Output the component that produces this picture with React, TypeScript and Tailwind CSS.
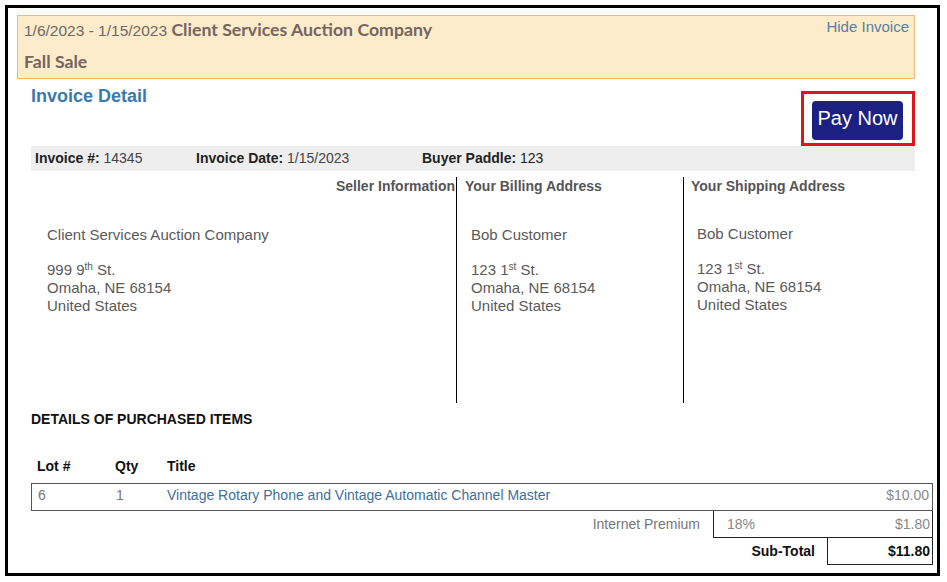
import React from "react";

const arial = { fontFamily: '"Liberation Sans", Arial, sans-serif' };

function Address({ name, street, sup, city, country }: { name: string; street: string; sup: string; city: string; country: string }) {
  const [num, rest] = street.split("|");
  return (
    <div className="text-[15px] leading-[18px] text-[#5a5a5a]">
      <div>{name}</div>
      <div className="mt-[17px]">
        {num}
        <sup className="text-[10px]">{sup}</sup>
        {rest}
      </div>
      <div>{city}</div>
      <div>{country}</div>
    </div>
  );
}

export default function App() {
  return (
    <div className="p-[5px] bg-white" style={arial}>
      <div className="w-[935px] h-[571px] border-[3px] border-black">
        {/* Sale banner */}
        <div className="ml-[9px] mt-[7px] w-[898px] h-[64px] border border-[#f2ba70] bg-[#fdebc9] pl-[6px] pr-[5px]">
          <div className="flex justify-between pt-[3px]">
            <div className="leading-[22px] text-[15.5px] text-[#6a6a6a]">
              1/6/2023 - 1/15/2023{" "}
              <span className="font-bold text-[17.7px] text-[#746562]" style={{ fontFamily: "Lato, sans-serif" }}>
                Client Services Auction Company
              </span>
            </div>
            <a className="leading-[18px] -mt-[1px] text-[15px] text-[#5282a7] cursor-pointer">Hide Invoice</a>
          </div>
          <div className="mt-[9px] leading-[22px] font-bold text-[17.7px] text-[#746562]" style={{ fontFamily: "Lato, sans-serif" }}>
            Fall Sale
          </div>
        </div>

        <div className="ml-[23px]">
          {/* Title + pay button */}
          <div className="flex justify-between w-[884px] h-[67px]">
            <h1 className="pt-[6px] leading-[22px] text-[18px] font-bold text-[#3b79ae]">Invoice Detail</h1>
            <div className="mt-[12px] w-[114px] h-[55px] border-[3px] border-[#e0141b] pl-[8px] pt-[7px]">
              <button className="w-[91px] h-[39px] pb-[5px] rounded-[4px] bg-[#1c2181] text-white text-[20px] leading-[24px]">
                Pay Now
              </button>
            </div>
          </div>

          {/* Invoice info bar */}
          <div className="flex w-[884px] h-[25px] items-center pb-[1px] bg-[#eeeeee] pl-[4px] text-[14px] text-[#222]">
            <div className="w-[161px]">
              <b>Invoice #:</b> <span className="text-[#444]">14345</span>
            </div>
            <div className="w-[226px]">
              <b>Invoice Date:</b> <span className="text-[#444]">1/15/2023</span>
            </div>
            <div>
              <b>Buyer Paddle:</b> <span className="text-[#222]">123</span>
            </div>
          </div>

          {/* Addresses */}
          <div className="flex mt-[6px] h-[226px] text-[14px]">
            <div className="w-[425px]">
              <div className="pt-[1px] pr-[1px] leading-[16px] font-bold text-[#555] text-right">Seller Information</div>
              <div className="mt-[32px] pl-[16px]">
                <Address name="Client Services Auction Company" street="999 9| St." sup="th" city="Omaha, NE 68154" country="United States" />
              </div>
            </div>
            <div className="w-[227px] border-l border-black">
              <div className="pt-[1px] pl-[8px] leading-[16px] font-bold text-[#555]">Your Billing Address</div>
              <div className="mt-[32px] pl-[14px]">
                <Address name="Bob Customer" street="123 1| St." sup="st" city="Omaha, NE 68154" country="United States" />
              </div>
            </div>
            <div className="w-[232px] border-l border-black">
              <div className="pt-[1px] pl-[7px] leading-[16px] font-bold text-[#555]">Your Shipping Address</div>
              <div className="mt-[31px] pl-[13px]">
                <Address name="Bob Customer" street="123 1| St." sup="st" city="Omaha, NE 68154" country="United States" />
              </div>
            </div>
          </div>

          {/* Purchased items */}
          <div className="mt-[8px] leading-[16px] text-[14px] font-bold text-[#111]">DETAILS OF PURCHASED ITEMS</div>

          <div className="mt-[31px] flex leading-[16px] text-[14px] font-bold text-[#111]">
            <div className="w-[79px] pl-[6px]">Lot #</div>
            <div className="w-[52px] pl-[5px]">Qty</div>
            <div className="pl-[5px]">Title</div>
          </div>

          <div className="mt-[9px] w-[902px] text-[14px]">
            <div className="flex items-center h-[28px] pb-[3px] border border-[#555]">
              <div className="w-[78px] pl-[6px] text-[#777]">6</div>
              <div className="w-[51px] pl-[6px] text-[#777]">1</div>
              <div className="flex-1 pl-[6px] text-[#40709a]">Vintage Rotary Phone and Vintage Automatic Channel Master</div>
              <div className="pr-[3px] text-[#888]">$10.00</div>
            </div>
            <div className="flex h-[27px]">
              <div className="w-[682px] pr-[13px] flex items-center justify-end text-[#777]">Internet Premium</div>
              <div className="flex-1 flex items-center justify-between border-x border-b border-[#222] pl-[13px] pr-[2px] text-[#888]">
                <span>18%</span>
                <span>$1.80</span>
              </div>
            </div>
            <div className="flex h-[27px] font-bold text-[#111]">
              <div className="w-[796px] pr-[12px] flex items-center justify-end">Sub-Total</div>
              <div className="flex-1 flex items-center justify-end border-x border-b border-[#222] pr-[2px]">$11.80</div>
            </div>
          </div>
        </div>
      </div>
    </div>
  );
}
